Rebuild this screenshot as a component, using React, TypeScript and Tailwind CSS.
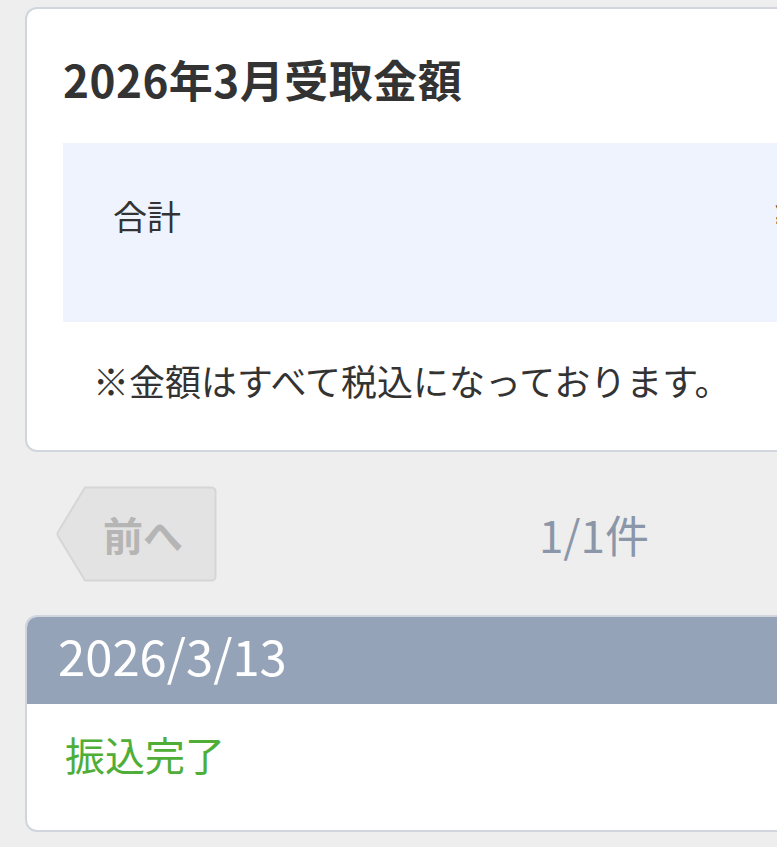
const jp = { fontFamily: '"Noto Sans CJK JP", "Noto Sans", sans-serif' };

function PrevButton() {
  return (
    <button
      type="button"
      disabled
      className="relative flex h-[96px] w-[162px] items-center pl-[48px]"
    >
      <svg
        className="absolute inset-0"
        width="162"
        height="96"
        viewBox="0 0 162 96"
        aria-hidden="true"
      >
        <path
          d="M30 1.5 H156 Q160.5 1.5 160.5 6 V90 Q160.5 94.5 156 94.5 H30 L3 50 Q2 48 3 46 Z"
          fill="#e3e3e3"
          stroke="#d6d6d6"
          strokeWidth="2"
        />
      </svg>
      <span className="relative text-[40px] font-bold leading-none text-[#b5b5b5]">前へ</span>
    </button>
  );
}

export default function App() {
  return (
    <div className="h-[847px] w-[777px] overflow-hidden bg-[#eeeeee]" style={jp}>
      <div className="w-[1188px] px-[25px] pt-[7px]">
        <section className="rounded-[12px] border-2 border-[#d0d5de] bg-white px-[36px] pb-[52px] pt-[48px]">
          <h2 className="text-[44px] font-bold leading-none tracking-[0.5px] text-[#333333]">
            2026年3月受取金額
          </h2>

          <div className="mt-[42px] h-[179px] bg-[#eef3fd] px-[50px] pt-[56px]">
            <div className="flex text-[34px] leading-none text-[#333333]">
              <span className="w-[662px]">合計</span>
              <span className="font-bold">¥12,000</span>
            </div>
          </div>

          <p className="mt-[40px] pl-[30px] text-[36px] leading-none text-[#333333]">
            ※金額はすべて税込になっております。
          </p>
        </section>

        <nav className="mt-[34px] flex items-center pl-[30px]">
          <PrevButton />
          <div className="flex-1 pr-[192px] text-center text-[44px] leading-none text-[#8b97a9]">1/1件</div>
        </nav>

        <section className="mt-[33px] overflow-hidden rounded-[12px] border-2 border-[#d0d5de] bg-white">
          <div className="h-[87px] bg-[#95a3b8] pl-[31px] pt-[13px] text-[49px] leading-none text-white">
            2026/3/13
          </div>
          <div className="h-[126px] pl-[38px] pt-[30px] text-[40px] leading-none text-[#4fae38]">
            振込完了
          </div>
        </section>
      </div>
    </div>
  );
}
